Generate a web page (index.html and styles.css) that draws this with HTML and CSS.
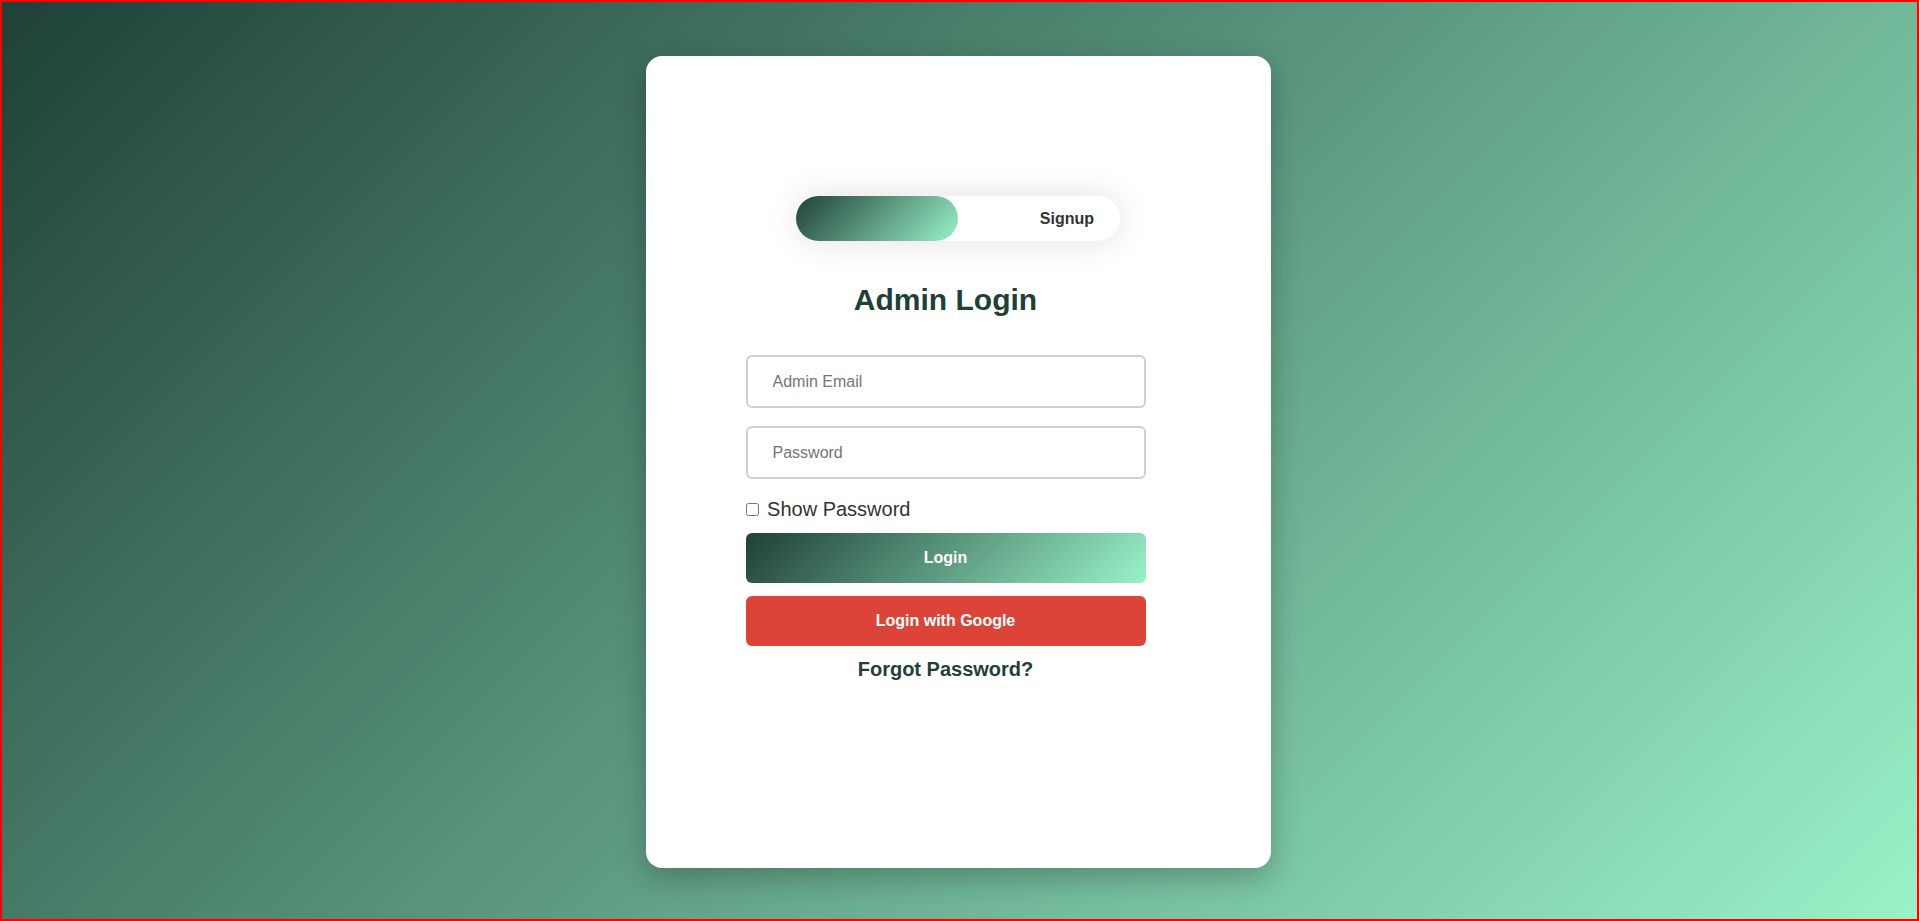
FILE: index.html
```html
<!DOCTYPE html>
<html lang="en">
<head>
<meta charset="utf-8">
<title>Admin Login</title>
<link rel="stylesheet" href="styles.css">
</head>
<body>
<div class="page">
  <div class="card">
    <div class="toggle">
      <div class="slider"></div>
      <span class="tab tab-login">Login</span>
      <span class="tab tab-signup">Signup</span>
    </div>
    <h2 class="title">Admin Login</h2>
    <form class="form">
      <input class="field" type="email" placeholder="Admin Email">
      <input class="field" type="password" placeholder="Password">
      <label class="show"><input type="checkbox" class="check"> Show Password</label>
      <button type="button" class="btn btn-login">Login</button>
      <button type="button" class="btn btn-google">Login with Google</button>
      <a class="forgot" href="#">Forgot Password?</a>
    </form>
  </div>
</div>
</body>
</html>
```

FILE: styles.css
```css
* { box-sizing: border-box; }
html, body { margin: 0; padding: 0; }
body {
  font-family: "Liberation Sans", Arial, sans-serif;
}
.page {
  height: 100vh;
  border: 2px solid #ff0000;
  background: linear-gradient(135deg, #1f4037, #99f2c8);
  display: flex;
  align-items: center;
  justify-content: center;
}
.card {
  width: 625px;
  height: 812px;
  margin: 3px 3px 0 0;
  background: #fff;
  border-radius: 16px;
  box-shadow: 0 10px 30px rgba(0, 0, 0, 0.25);
  display: flex;
  flex-direction: column;
  align-items: center;
  padding: 140px 25px 0 0;
}
.toggle {
  position: relative;
  width: 324px;
  height: 45px;
  margin-left: 25px;
  border-radius: 23px;
  background: #fff;
  box-shadow: 0 0 35px rgba(0, 0, 0, 0.12);
  display: flex;
  flex-shrink: 0;
}
.slider {
  position: absolute;
  left: 0;
  top: 0;
  width: 50%;
  height: 100%;
  border-radius: 23px;
  background: linear-gradient(135deg, #1f4037, #99f2c8);
  z-index: 1;
}
.tab {
  flex: 1;
  font-size: 16px;
  font-weight: bold;
  color: #333;
  line-height: 45px;
}
.tab-login { text-align: center; color: #fff; }
.tab-signup { text-align: right; padding-right: 26px; }
.title {
  margin: 41px 0 0;
  font-size: 30px;
  line-height: 36px;
  font-weight: bold;
  color: #1f4037;
}
.form {
  width: 400px;
  margin-top: 37px;
  display: flex;
  flex-direction: column;
}
.field {
  height: 53px;
  width: 100%;
  border: 2px solid #d0d0d0;
  border-radius: 6px;
  padding: 0 25px;
  font-family: "Liberation Sans", Arial, sans-serif;
  font-size: 16px;
  color: #333;
  outline: none;
}
.field::placeholder { color: #757575; }
.field + .field { margin-top: 18px; }
.show {
  margin-top: 18px;
  font-size: 20px;
  line-height: 24px;
  color: #333;
}
.check {
  margin: 3px 3px 3px 0;
  width: 13px;
  height: 13px;
}
.btn {
  height: 50px;
  width: 100%;
  border: none;
  border-radius: 6px;
  color: #fff;
  font-family: "Liberation Sans", Arial, sans-serif;
  font-size: 16px;
  font-weight: bold;
}
.btn-login {
  margin-top: 12px;
  background: linear-gradient(135deg, #1f4037, #99f2c8);
}
.btn-google {
  margin-top: 13px;
  background: #db4437;
}
.forgot {
  margin-top: 11px;
  align-self: center;
  font-size: 20px;
  line-height: 24px;
  font-weight: bold;
  color: #1f4037;
  text-decoration: none;
}
```
